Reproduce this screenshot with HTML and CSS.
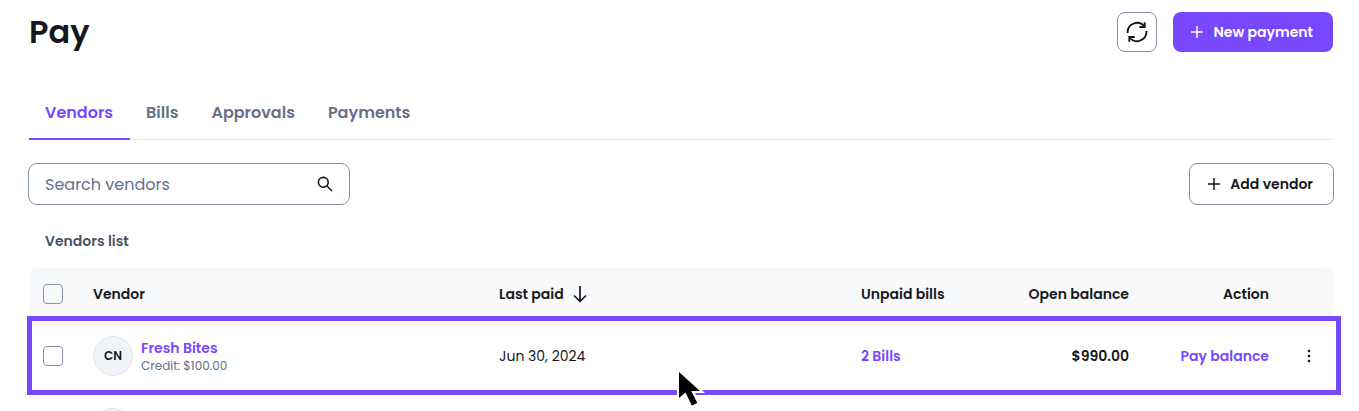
FILE: index.html
```html
<!DOCTYPE html>
<html lang="en">
<head>
<meta charset="utf-8">
<meta name="viewport" content="width=device-width, initial-scale=1">
<title>Pay</title>
<link rel="stylesheet" href="styles.css">
</head>

<body>
<main class="page">

<header class="page-header">
  <h1>Pay</h1>
  <div class="actions">
    <button type="button" class="btn btn-icon" aria-label="Refresh">
      <svg width="24" height="24" viewBox="0 0 24 24" fill="none" stroke="currentColor" stroke-width="1.9">
        <path d="M2.600 13V12A9.400 9.400 0 0 1 19.400 6.500"/>
        <path d="M19.700 2.200V7H14.300"/>
        <path d="M21.400 11V12A9.400 9.400 0 0 1 4.600 17.500"/>
        <path d="M4.300 21.800V17H9.700"/>
      </svg>
    </button>
    <button type="button" class="btn btn-text btn-primary">
      <svg width="14" height="14" viewBox="0 0 14 14" fill="none" stroke="currentColor" stroke-width="1.5"><path d="M7 1V13M1 7H13"/></svg>
      New payment
    </button>
  </div>
</header>

<nav class="tabs">
  <a href="#" class="active">Vendors</a>
  <a href="#">Bills</a>
  <a href="#">Approvals</a>
  <a href="#">Payments</a>
</nav>

<div class="toolbar">
  <div class="search">
    <input type="text" placeholder="Search vendors" aria-label="Search vendors">
    <svg width="16" height="16" viewBox="0 0 16 16" fill="none" stroke="currentColor" stroke-width="1.6"><circle cx="6.3" cy="6.3" r="4.9"/><path d="M9.8 9.8L15 15"/></svg>
  </div>
  <button type="button" class="btn btn-text btn-add">
    <svg width="14" height="14" viewBox="0 0 14 14" fill="none" stroke="currentColor" stroke-width="1.5"><path d="M7 1V13M1 7H13"/></svg>
    Add vendor
  </button>
</div>

<h2>Vendors list</h2>

<table class="vendors">
  <colgroup>
    <col class="col-check">
    <col>
    <col class="col-paid">
    <col class="col-bills">
    <col class="col-balance">
    <col class="col-action">
    <col class="col-menu">
  </colgroup>
  <thead>
    <tr>
      <th class="check"><input type="checkbox" aria-label="Select all vendors"></th>
      <th>Vendor</th>
      <th>
        <span class="sort">Last paid
          <svg width="14" height="18" viewBox="0 0 14 18" fill="none" stroke="currentColor" stroke-width="1.7"><path d="M7 1V16M1 10.5L7 16.3L13 10.5"/></svg>
        </span>
      </th>
      <th>Unpaid bills</th>
      <th class="right">Open balance</th>
      <th class="right">Action</th>
      <th></th>
    </tr>
  </thead>
  <tbody>
    <tr class="highlight">
      <td class="check"><input type="checkbox" aria-label="Select Fresh Bites"></td>
      <td>
        <div class="vendor">
          <span class="avatar">CN</span>
          <div>
            <a href="#">Fresh Bites</a>
            <p>Credit: $100.00</p>
          </div>
        </div>
      </td>
      <td>Jun 30, 2024</td>
      <td><a href="#">2 Bills</a></td>
      <td class="right balance">$990.00</td>
      <td class="right"><a href="#">Pay balance</a></td>
      <td class="menu">
        <button type="button" aria-label="More actions">
          <svg width="4" height="14" viewBox="0 0 4 14" fill="currentColor"><circle cx="2" cy="2" r="1.3"/><circle cx="2" cy="7" r="1.3"/><circle cx="2" cy="12" r="1.3"/></svg>
        </button>
      </td>
    </tr>
    <tr>
      <td class="check"><input type="checkbox" aria-label="Select vendor"></td>
      <td><div class="vendor"><span class="avatar"></span></div></td>
      <td colspan="5"></td>
    </tr>
  </tbody>
</table>

<svg class="cursor" width="32" height="42" viewBox="0 0 32 42">
  <path fill="#fff" d="M2 0L30 26H20L27 39L15 42L10 32L2 36Z"/>
  <path fill="#000" d="M4 5V31L10.500 25.500L16.800 38.500L22.300 36L16.300 24H25Z"/>
</svg>

</main>
</body>
</html>
```

FILE: styles.css
```css
* {
  box-sizing: border-box;
}

body {
  margin: 0;
  background: #fff;
  color: #17181c;
  font-family: Poppins, Inter, sans-serif;
  font-size: 14px;
  line-height: 20px;
}

.page {
  position: relative;
  height: 100vh;
  padding: 12px 26px 0 29px;
  overflow: hidden;
}

a {
  color: #7848ff;
  font-weight: 600;
  text-decoration: none;
}

.page-header,
.actions,
.toolbar {
  display: flex;
  align-items: center;
}

.page-header,
.toolbar {
  justify-content: space-between;
}

h1 {
  margin: 0;
  font-size: 32px;
  line-height: 40px;
  font-weight: 600;
}

.actions {
  gap: 16px;
}

/* buttons */
.btn {
  display: flex;
  align-items: center;
  justify-content: center;
  height: 40px;
  padding: 0;
  border: 1px solid #8590a6;
  border-radius: 8px;
  background: #fff;
  color: #17181c;
  font: inherit;
  font-weight: 600;
}

.btn-icon {
  width: 40px;
}

.btn-text {
  gap: 9px;
  padding: 0 20px 0 17px;
}

.btn-primary {
  border: 0;
  background: #7848ff;
  color: #fff;
}

.btn-add {
  height: 42px;
}

/* tabs */
.tabs {
  display: flex;
  margin-top: 34px;
  border-bottom: 1px solid #e3e5e8;
}

.tabs a {
  height: 54px;
  margin-bottom: -1px;
  padding: 15px 17px 0 16px;
  color: #667089;
  font-size: 16px;
  line-height: 24px;
}

.tabs .active {
  border-bottom: 2px solid #7848ff;
  color: #7848ff;
}

.toolbar {
  margin: 23px -1px 0;
}

.search {
  display: flex;
  align-items: center;
  width: 322px;
  height: 42px;
  padding: 0 16px;
  border: 1px solid #8793ab;
  border-radius: 9px;
}

.search input {
  flex: 1;
  min-width: 0;
  padding: 2px 0 0;
  border: 0;
  outline: 0;
  background: none;
  font: inherit;
  font-size: 16px;
}

.search input::placeholder {
  color: #667089;
}

h2 {
  margin: 26px 16px 17px;
  color: #46536a;
  font-size: 14px;
  line-height: 20px;
  font-weight: 600;
}

/* vendors table */
.vendors {
  width: 100%;
  table-layout: fixed;
  border-collapse: separate;
  border-spacing: 0;
}

.col-check,
.col-menu {
  width: 64px;
}

.col-paid {
  width: 362px;
}

.col-balance {
  width: 128px;
}

.col-bills,
.col-action {
  width: 140px;
}

th,
td {
  padding: 0;
  text-align: left;
  vertical-align: middle;
  white-space: nowrap;
}

th {
  height: 52px;
  background: #f8f9fb;
  font-weight: 600;
}

th:first-child {
  border-top-left-radius: 8px;
}

th:last-child {
  border-top-right-radius: 8px;
}

td {
  height: 72px;
}

.right {
  text-align: right;
}

.check {
  padding-left: 14px;
}

.check input {
  appearance: none;
  display: block;
  width: 20px;
  height: 20px;
  margin: 0;
  border: 1px solid #8793ab;
  border-radius: 4px;
}

.sort {
  display: flex;
  align-items: center;
  gap: 9px;
}

.highlight {
  position: relative;
}

/* frame round the whole row, drawn from its first cell */
.highlight .check::after {
  content: "";
  position: absolute;
  inset: -4px -8px -3px -2px;
  border: 5px solid #7848ff;
  pointer-events: none;
}

.vendor {
  display: flex;
  align-items: center;
  gap: 8px;
}

.vendor a {
  display: block;
}

.vendor p {
  margin: 0;
  color: #667089;
  font-size: 12px;
  line-height: 16px;
}

.avatar {
  display: flex;
  align-items: center;
  justify-content: center;
  width: 40px;
  height: 40px;
  border: 1px solid #e2e6eb;
  border-radius: 50%;
  background: #f0f4f8;
  font-size: 12px;
  font-weight: 600;
}

.balance {
  font-weight: 600;
}

.menu button {
  display: flex;
  justify-content: center;
  width: 24px;
  margin-left: 28px;
  padding: 0;
  border: 0;
  background: none;
  color: inherit;
}

/* mouse pointer over the list */
.cursor {
  position: absolute;
  top: 367px;
  left: calc(50% - 5px);
}
```
